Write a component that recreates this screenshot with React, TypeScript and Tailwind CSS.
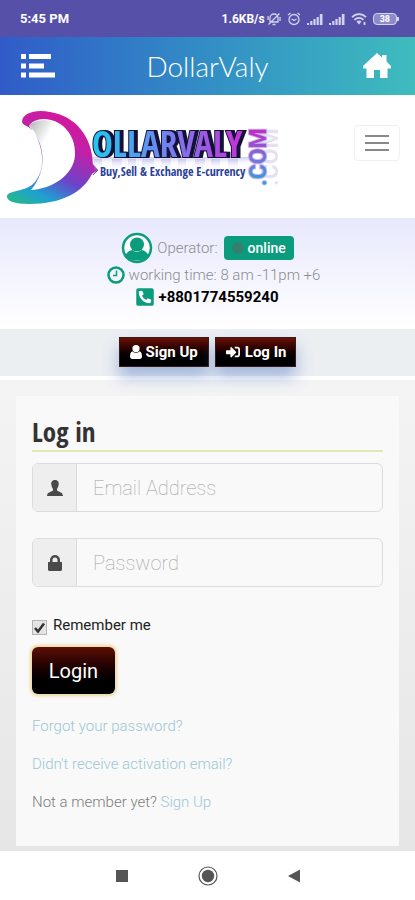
import { useState } from 'react';
import { FaSignInAlt, FaPhoneSquareAlt } from 'react-icons/fa';

function StatusBar() {
  return (
    <div className="flex h-[37px] items-center justify-between bg-[#5650a8] pl-5 pr-4 font-['Roboto',sans-serif] text-white">
      <span className="text-[13px] font-bold">5:45 PM</span>
      <div className="flex items-center gap-1.5">
        <span className="text-xs font-bold">1.6KB/s</span>
        <svg className="-ml-1 h-3.5 w-3.5" viewBox="0 0 14 14" fill="none" stroke="#d5d2f0" strokeWidth="1.3">
          <path d="M3 10V6a4 4 0 0 1 8 0v4H3M5.5 12.5h3M1.5 12.5l11-11M1 4v4M13 5v4" />
        </svg>
        <svg className="h-3.5 w-3.5" viewBox="0 0 14 14" fill="none" stroke="#d5d2f0" strokeWidth="1.3">
          <circle cx="7" cy="7.5" r="5" />
          <path d="M1 3l2.5-2M13 3l-2.5-2M4.5 7l2.5 1.5L9.5 7" />
        </svg>
        <Signal />
        <Signal />
        <svg className="h-3.5 w-4" viewBox="0 0 16 14" fill="none" stroke="#d5d2f0" strokeWidth="1.8">
          <path d="M1 5.2C5 1 11 1 15 5.2M3.5 7.8c2.5-2.6 6.5-2.6 9 0" />
          <path d="M5.5 9.5c1.5-1.3 3.5-1.3 5 0L8 12.5z" fill="#d5d2f0" stroke="none" />
          <path d="M13.5 10v3" />
        </svg>
        <div className="flex items-center">
          <span className="rounded border border-[#d5d2f0] bg-[#8f8bcb] px-1.5 text-[9px] leading-[10px] font-bold">38</span>
          <span className="h-1 w-0.5 bg-[#d5d2f0]" />
        </div>
      </div>
    </div>
  );
}

function Signal() {
  return (
    <svg className="h-3.5 w-4" viewBox="0 0 16 14" fill="#d5d2f0">
      <path d="M0 11h2v2H0zM3.2 9h2.2v4H3.2zM6.4 7h2.2v6H6.4zM9.6 5h2.2v8H9.6zM12.8 2h2.7v11h-2.7z" />
    </svg>
  );
}

function AppBar() {
  return (
    <header className="flex h-[58px] items-center justify-between bg-linear-to-r from-[#315bc8] to-[#3fbcbd] px-5 text-white">
      <button type="button" aria-label="Menu">
        <svg className="h-6 w-9" viewBox="0 0 36 24" fill="currentColor">
          <path d="M1 0h5v5H1zM9 0h22v5H9zM1 9.5h5v5H1zM9 9.5h15v5H9zM1 18.5h5v5H1zM9 18.5h26v5H9z" />
        </svg>
      </button>
      <h1 className="font-['Lato',sans-serif] text-[28px] leading-8 font-light">DollarValy</h1>
      <button type="button" aria-label="Home" className="flex w-9 justify-center">
        <svg className="h-[26px] w-7" viewBox="0 0 28 26" fill="currentColor">
          <path d="M14 0l5 4.5V2h4.5v6.5l4.5 4.5v2.5h-3.5V25H17v-8h-6v8H3.5v-9.5H0V13z" />
        </svg>
      </button>
    </header>
  );
}

function Logo() {
  return (
    <svg className="h-[116px] w-[284px]" viewBox="0 0 284 116" role="img" aria-label="DollarValy.com">
      <defs>
        <linearGradient id="moon" x1="0.7" y1="0" x2="0.2" y2="1">
          <stop offset="0" stopColor="#d8169a" />
          <stop offset="0.3" stopColor="#c020a8" />
          <stop offset="0.62" stopColor="#6a45c8" />
          <stop offset="0.85" stopColor="#1f9fd2" />
          <stop offset="1" stopColor="#24b49a" />
        </linearGradient>
        <linearGradient id="inner" x1="0" y1="0" x2="0.7" y2="0.6">
          <stop offset="0" stopColor="#aeb4b2" />
          <stop offset="0.5" stopColor="#ffffff" />
        </linearGradient>
        <linearGradient id="word" gradientUnits="userSpaceOnUse" x1="92" y1="0" x2="242" y2="0">
          <stop offset="0" stopColor="#1fc8ee" />
          <stop offset="0.45" stopColor="#6a8af0" />
          <stop offset="1" stopColor="#c630d8" />
        </linearGradient>
        <linearGradient id="com" gradientUnits="userSpaceOnUse" x1="0" y1="0" x2="55" y2="0">
          <stop offset="0" stopColor="#24a8d8" />
          <stop offset="0.5" stopColor="#7a72d8" />
          <stop offset="1" stopColor="#c02cc0" />
        </linearGradient>
        <linearGradient id="fade" x1="0" y1="0" x2="0" y2="1">
          <stop offset="0" stopColor="#a7a5e6" stopOpacity="0.55" />
          <stop offset="1" stopColor="#ffffff" stopOpacity="0" />
        </linearGradient>
      </defs>
      <path d="M29 30C35 25 44 24 54 27C70 32 76 48 75 62C72 80 55 93 31 95C46 80 48 50 29 30z" fill="url(#inner)" />
      <path
        d="M22 27C22 18 36 14 50 17C76 21 92 42 93 69L98 75L92 79C83 97 62 109 29 109C15 109 6 106 7 101C9 95 24 97 33 89C47 76 43 51 34 37C30 31 23 31 22 27zM29 31C44 46 49 74 31 95C52 94 74 80 75 60C76 38 60 24 44 24C37 24 31 27 29 31z"
        fill="url(#moon)"
        fillRule="evenodd"
      />
      <path d="M94 64h8v12h-8zM112 64h10v12h-10zM128 64h8v12h-8zM142 64h12v12h-12zM161 64h10v12h-10zM178 64h8v12h-8zM195 64h10v12h-10zM211 64h9v12h-9zM228 64h10v12h-10z" fill="url(#fade)" />
      <rect x="92" y="62" width="160" height="9" fill="url(#fade)" />
      <text
        x="92"
        y="62"
        className="drop-shadow-[3px_0_0_#15123a]"
        fontFamily="'Open Sans Condensed', sans-serif"
        fontWeight="bold"
        fontSize="35"
        fill="url(#word)"
        stroke="#15123a"
        strokeWidth="2"
        paintOrder="stroke"
      >
        OLLARVALY
      </text>
      <path d="M93 80l5-5" stroke="#7a45c0" strokeWidth="1" />
      <text x="100" y="81" fontFamily="'Open Sans Condensed', sans-serif" fontWeight="bold" fontSize="12" fill="#2a3f9a">
        Buy,Sell &amp; Exchange E-currency
      </text>
      <g fontFamily="'Roboto', sans-serif" fontWeight="bold" fontSize="23">
        <text transform="translate(278 91) rotate(-90)" fill="#b9a9dc" opacity="0.35" aria-hidden="true">.COM</text>
        <text transform="translate(266 91) rotate(-90)" fill="url(#com)" stroke="#c9b8ee" strokeWidth="2" paintOrder="stroke">.COM</text>
      </g>
    </svg>
  );
}

function SiteHeader() {
  return (
    <div className="flex h-[123px] items-start justify-between bg-white pr-[15px]">
      <Logo />
      <button type="button" aria-label="Toggle navigation" className="mt-[30px] flex h-9 w-[46px] flex-col items-center justify-center gap-[5px] rounded border border-[#f0f0f0]">
        <span className="h-0.5 w-6 bg-[#888888]" />
        <span className="h-0.5 w-6 bg-[#888888]" />
        <span className="h-0.5 w-6 bg-[#888888]" />
      </button>
    </div>
  );
}

function OperatorInfo() {
  return (
    <section className="flex h-[111px] flex-col items-center bg-linear-to-b from-[#e7e8fc] to-white pt-3.5 text-[15px] font-light text-[#8c8c92]">
      <div className="flex h-8 items-center gap-1">
        <svg className="h-8 w-8" viewBox="0 0 32 32">
          <circle cx="16" cy="16" r="14" fill="#ffffff" stroke="#0a9c7c" strokeWidth="2.5" />
          <circle cx="16" cy="12.5" r="7" fill="#0a9c7c" />
          <path d="M4.5 24c1-4 4-5.5 7.5-6 2 2.5 6 2.5 8 0 3.5.5 6.5 2 7.5 6C24 30 8 30 4.5 24z" fill="#0a9c7c" />
        </svg>
        <span className="mr-0.5">Operator:</span>
        <span className="flex h-6 items-center gap-1 rounded-sm bg-[#0a9c7c] px-2 text-sm font-medium text-white">
          <span className="h-3 w-3 rounded-full bg-[#35806f]" />
          online
        </span>
      </div>
      <div className="flex h-[22px] items-center gap-1 pl-3">
        <svg className="h-[18px] w-[18px]" viewBox="0 0 18 18" fill="none" stroke="#0a9c7c">
          <circle cx="9" cy="9" r="7.5" strokeWidth="2.5" />
          <path d="M9.5 4.5v5H6" strokeWidth="1.5" />
        </svg>
        <span>working time: 8 am -11pm +6</span>
      </div>
      <div className="flex h-[22px] items-center gap-1">
        <FaPhoneSquareAlt className="h-5 w-[18px] text-[#0a9c7c]" />
        <a href="tel:+8801774559240" className="font-bold text-black">+8801774559240</a>
      </div>
    </section>
  );
}

function AuthBar() {
  const button =
    'flex h-[30px] items-center gap-1 border border-[#3a1a16] bg-linear-to-b from-[#6b1206] to-black to-80% text-[15px] font-bold text-white shadow-[0_10px_16px_rgba(70,110,190,0.45)]';
  return (
    <div className="relative flex h-[51px] items-start justify-center gap-1.5 border-b-4 border-white bg-[#ebeff2] pt-2">
      <a href="#signup" className={`${button} px-2.5`}>
        <svg className="h-3.5 w-3" viewBox="0 0 12 14" fill="currentColor">
          <circle cx="6" cy="3.6" r="3.6" />
          <path d="M2.5 6.3c2 2 5 2 7 0C11.5 7 12 9 12 11.5 12 13 11 14 9.8 14H2.200C1 14 0 13 0 11.5 0 9 .5 7 2.5 6.3z" />
        </svg>
        Sign Up
      </a>
      <a href="#login" className={`${button} px-[9px]`}>
        <FaSignInAlt className="h-3.5 w-4" />
        Log In
      </a>
    </div>
  );
}

function LoginForm() {
  const [email, setEmail] = useState('');
  const [password, setPassword] = useState('');
  const [remember, setRemember] = useState(true);

  const group = 'flex h-[49px] overflow-hidden rounded-md border border-[#dcdcdc]';
  const addon = 'flex w-11 shrink-0 items-center justify-center border-r border-[#dcdcdc] bg-[#eeeeee] text-[#4a4a4a]';
  const input = 'min-w-0 flex-1 bg-transparent px-4 text-xl font-thin outline-none placeholder:text-[#a0a0a0]';

  return (
    <form
      className="bg-[#f9f9f9] px-4 pt-[18px] pb-8"
      onSubmit={e => e.preventDefault()}
    >
      <h2 className="border-b-2 border-[#dfe9b8] font-['Open_Sans_Condensed','Roboto_Condensed',sans-serif] text-[27px] leading-9 font-bold text-[#333333]">
        Log in
      </h2>
      <div className={`${group} mt-[11px]`}>
        <label htmlFor="email" aria-label="Email Address" className={addon}>
          <svg className="h-4 w-4" viewBox="0 0 16 16" fill="currentColor">
            <path d="M8 0C5 0 4 2.2 4.3 4.5 4.5 7 5.5 8 6 9v1.5C5 11.5 0 12 0 16h16c0-4-5-4.5-6-5.5V9c.5-1 1.5-2 1.7-4.5C12 2.2 11 0 8 0z" />
          </svg>
        </label>
        <input id="email" type="email" placeholder="Email Address" value={email} onChange={e => setEmail(e.target.value)} className={input} />
      </div>
      <div className={`${group} mt-[26px]`}>
        <label htmlFor="password" aria-label="Password" className={addon}>
          <svg className="h-4 w-4" viewBox="0 0 16 16" fill="currentColor">
            <path d="M1 7h2V5a5 5 0 0 1 10 0v2h2v8l-1 1H2l-1-1zM5.5 7h5V5a2.5 2.5 0 0 0-5 0z" fillRule="evenodd" />
          </svg>
        </label>
        <input id="password" type="password" placeholder="Password" value={password} onChange={e => setPassword(e.target.value)} className={input} />
      </div>
      <label className="mt-[26px] flex h-6 items-center gap-1.5 text-[15px] text-[#222222]">
        <span className="relative mt-1 flex">
          <input
            type="checkbox"
            checked={remember}
            onChange={e => setRemember(e.target.checked)}
            className="h-[15px] w-[15px] appearance-none border border-[#b5b5b5] bg-[#e4e4e4]"
          />
          {remember && (
            <svg className="pointer-events-none absolute inset-0 h-[15px] w-[15px]" viewBox="0 0 15 15" fill="none" stroke="#333333" strokeWidth="2.5">
              <path d="M3 8l3 3.5L12 3.5" />
            </svg>
          )}
        </span>
        Remember me
      </label>
      <button
        type="submit"
        className="mt-2.5 h-[47px] w-[83px] rounded-md bg-linear-to-b from-[#5e1006] to-black to-85% text-xl text-white shadow-[0_0_3px_2px_#ecd9a0]"
      >
        Login
      </button>
      <div className="mt-5 flex flex-col items-start gap-3.5 text-[15px] leading-6 font-light text-[#7d7d7d]">
        <a href="#forgot" className="text-[#9cc8d4]">Forgot your password?</a>
        <a href="#activation" className="text-[#9cc8d4]">Didn't receive activation email?</a>
        <p>
          Not a member yet? <a href="#signup" className="text-[#9cc8d4]">Sign Up</a>
        </p>
      </div>
    </form>
  );
}

function NavigationBar() {
  return (
    <nav className="flex h-[49px] items-center justify-center gap-[66px] bg-white text-[#555555]">
      <button type="button" aria-label="Recent apps" className="flex w-5 justify-center">
        <span className="h-3 w-3 bg-[#555555]" />
      </button>
      <button type="button" aria-label="Home">
        <svg className="h-5 w-5" viewBox="0 0 20 20">
          <circle cx="10" cy="10" r="9" fill="none" stroke="currentColor" strokeWidth="1.2" />
          <circle cx="10" cy="10" r="6.2" fill="currentColor" />
        </svg>
      </button>
      <button type="button" aria-label="Back">
        <svg className="h-5 w-5" viewBox="0 0 20 20" fill="currentColor">
          <path d="M16 3.5v13L4 10z" />
        </svg>
      </button>
    </nav>
  );
}

export default function App() {
  return (
    <div className="bg-white font-['Roboto',sans-serif]">
      <StatusBar />
      <AppBar />
      <SiteHeader />
      <OperatorInfo />
      <AuthBar />
      <main className="bg-linear-to-b from-[#f4f4f4] to-[#e6e6e6] px-4 pt-4 pb-[5px]">
        <LoginForm />
      </main>
      <NavigationBar />
    </div>
  );
}
